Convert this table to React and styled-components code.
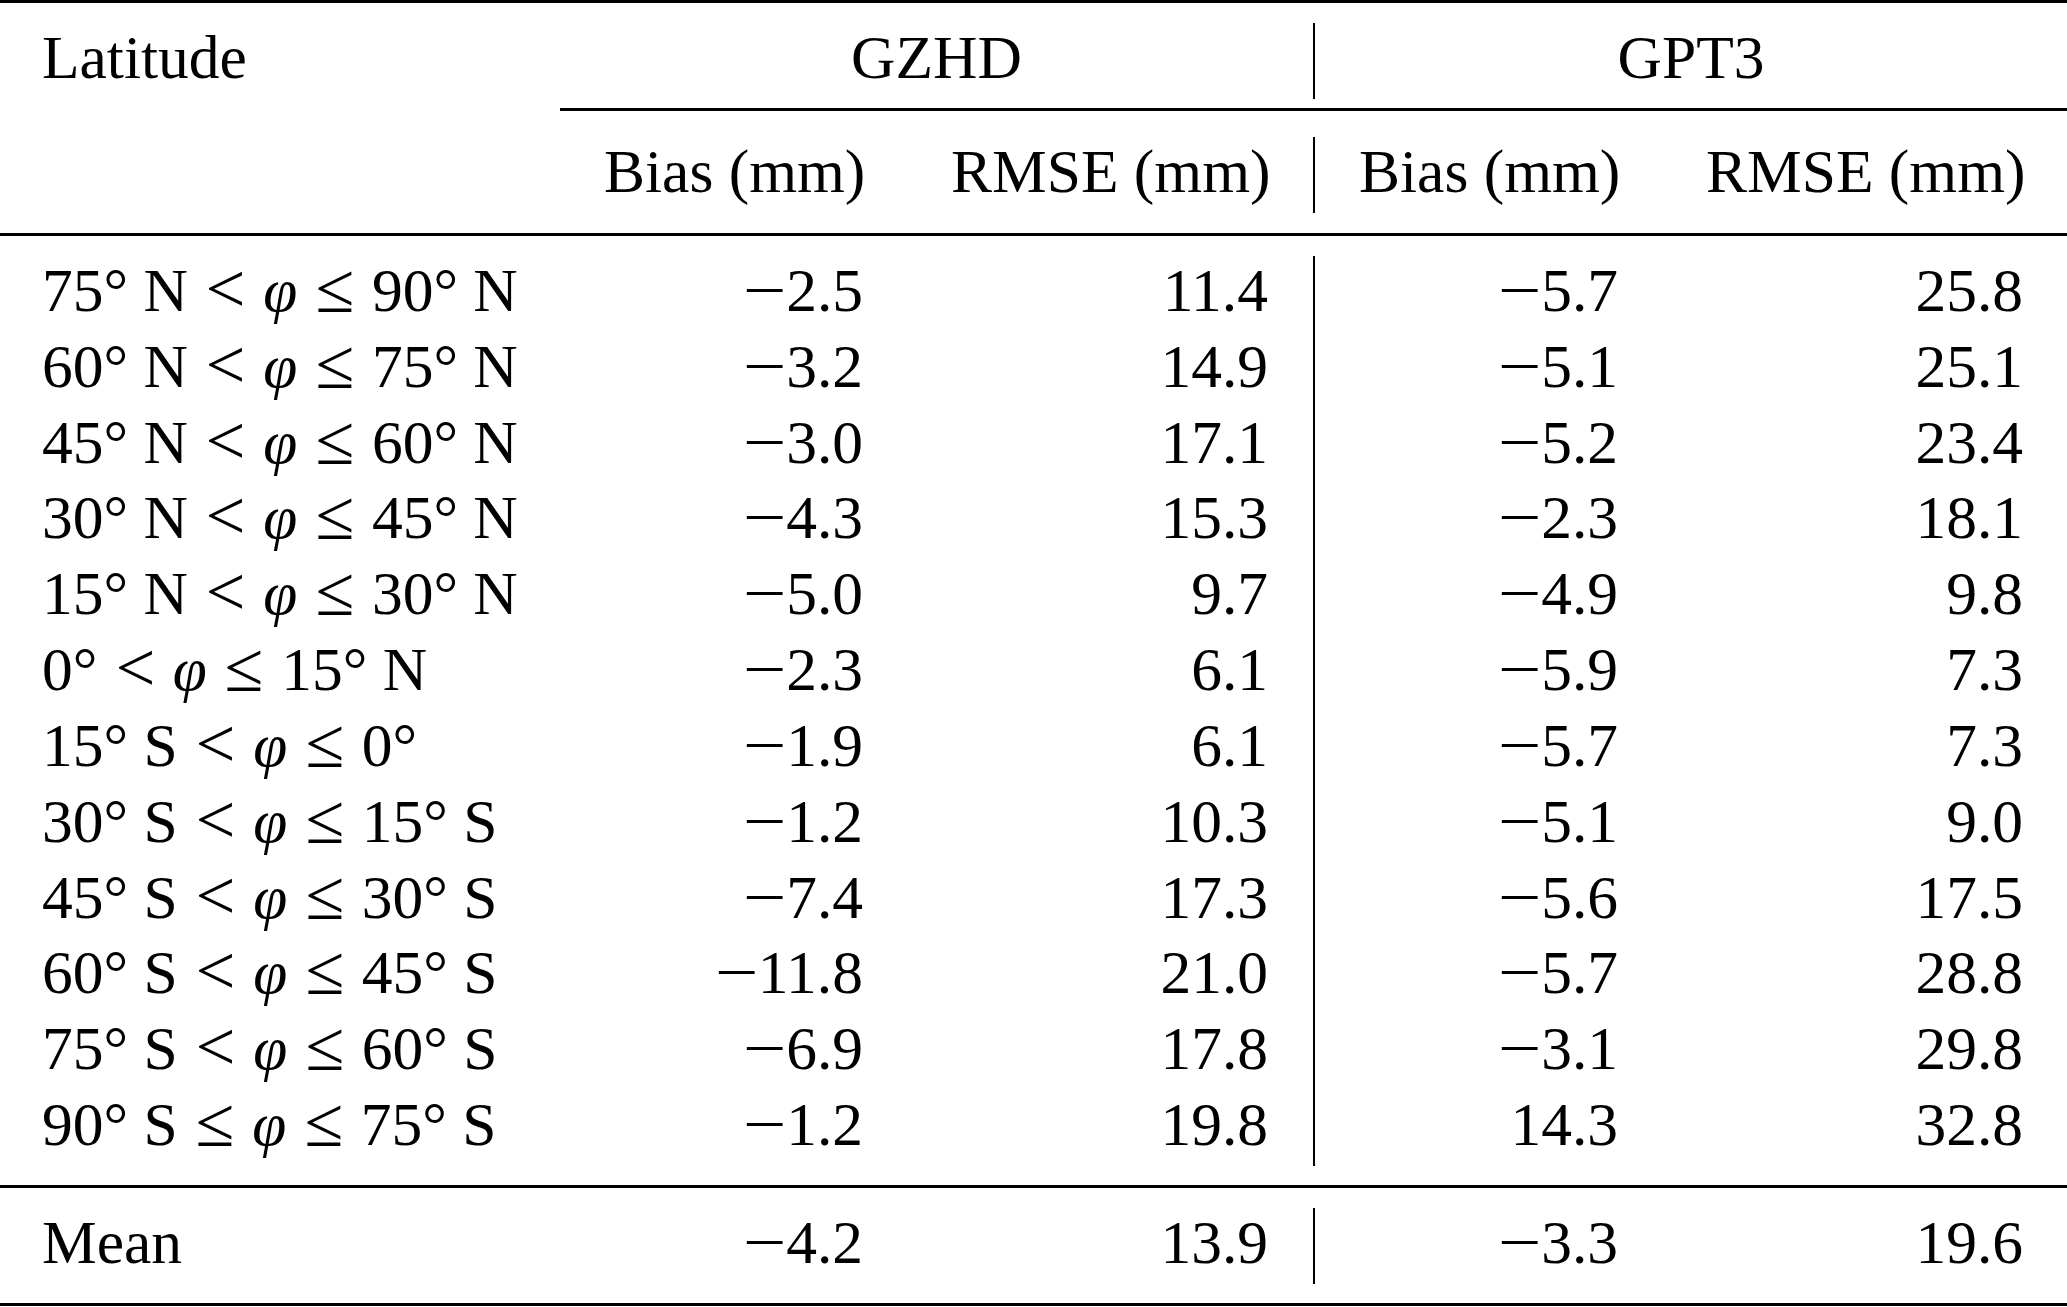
import React from 'react';
import styled, { createGlobalStyle } from 'styled-components';

const GlobalStyle = createGlobalStyle`
  html, body {
    margin: 0;
    padding: 0;
    background: #ffffff;
    overflow: hidden;
  }
`;

const Table = styled.div`
  width: 2067px;
  font-family: "Liberation Serif", "Times New Roman", serif;
  font-size: 61.5px;
  color: #000000;
`;

const Rule = styled.div`
  height: 3px;
  background: #000000;
  margin-left: ${({ $indent }) => $indent || 0}px;
`;

const Block = styled.div`
  padding-top: ${({ $pt }) => $pt}px;
  padding-bottom: ${({ $pb }) => $pb}px;
`;

const Row = styled.div`
  display: grid;
  grid-template-columns: 560px 347px 406px 349px 405px;
  height: ${({ $h }) => $h || 76}px;
  line-height: 68px;
  white-space: nowrap;
`;

const Cell = styled.div`
  padding: 0 ${({ $pr }) => ($pr === undefined ? 44 : $pr)}px 0 ${({ $pl }) => ($pl === undefined ? 44 : $pl)}px;
  text-align: ${({ $align }) => $align || 'right'};
  grid-column: ${({ $span }) => ($span ? `span ${$span}` : 'auto')};
  border-left: ${({ $divider }) => ($divider ? '2px solid #000' : 'none')};
  box-sizing: border-box;
`;

const Minus = styled.span`
  display: inline-block;
  margin-right: 8px;
  transform: scaleX(1.25);
  transform-origin: left center;
`;

const Phi = styled.span`
  font-style: italic;
`;

const Rel = styled.span`
  display: inline-block;
  margin: 0 5px;
  transform: scale(1.15);
  transform-origin: 50% 70%;
`;

const rows = [
  ['75° N', '<', '≤', '90° N', '−2.5', '11.4', '−5.7', '25.8'],
  ['60° N', '<', '≤', '75° N', '−3.2', '14.9', '−5.1', '25.1'],
  ['45° N', '<', '≤', '60° N', '−3.0', '17.1', '−5.2', '23.4'],
  ['30° N', '<', '≤', '45° N', '−4.3', '15.3', '−2.3', '18.1'],
  ['15° N', '<', '≤', '30° N', '−5.0', '9.7', '−4.9', '9.8'],
  ['0°', '<', '≤', '15° N', '−2.3', '6.1', '−5.9', '7.3'],
  ['15° S', '<', '≤', '0°', '−1.9', '6.1', '−5.7', '7.3'],
  ['30° S', '<', '≤', '15° S', '−1.2', '10.3', '−5.1', '9.0'],
  ['45° S', '<', '≤', '30° S', '−7.4', '17.3', '−5.6', '17.5'],
  ['60° S', '<', '≤', '45° S', '−11.8', '21.0', '−5.7', '28.8'],
  ['75° S', '<', '≤', '60° S', '−6.9', '17.8', '−3.1', '29.8'],
  ['90° S', '≤', '≤', '75° S', '−1.2', '19.8', '14.3', '32.8'],
];

const mean = ['−4.2', '13.9', '−3.3', '19.6'];

const Num = ({ value }) =>
  value.startsWith('−') ? (
    <>
      <Minus>−</Minus>
      {value.slice(1)}
    </>
  ) : (
    value
  );

const Values = ({ values }) => (
  <>
    <Cell>
      <Num value={values[0]} />
    </Cell>
    <Cell $pr={45}>
      <Num value={values[1]} />
    </Cell>
    <Cell $divider>
      <Num value={values[2]} />
    </Cell>
    <Cell>
      <Num value={values[3]} />
    </Cell>
  </>
);

const App = () => (
  <Table>
    <GlobalStyle />
    <Rule />
    <Block $pt={20} $pb={9}>
      <Row>
        <Cell $align="left" $pl={42}>Latitude</Cell>
        <Cell $span={2} $align="center">GZHD</Cell>
        <Cell $span={2} $align="center" $divider>GPT3</Cell>
      </Row>
    </Block>
    <Rule $indent={560} />
    <Block $pt={26} $pb={20}>
      <Row>
        <Cell />
        <Cell>Bias (mm)</Cell>
        <Cell $pr={45}>RMSE (mm)</Cell>
        <Cell $divider>Bias (mm)</Cell>
        <Cell>RMSE (mm)</Cell>
      </Row>
    </Block>
    <Rule />
    <Block $pt={20} $pb={19}>
      {rows.map(([low, rel1, rel2, high, ...values]) => (
        <Row key={low + high} $h={75.83}>
          <Cell $align="left" $pl={42}>
            {low} <Rel>{rel1}</Rel> <Phi>φ</Phi> <Rel>{rel2}</Rel> {high}
          </Cell>
          <Values values={values} />
        </Row>
      ))}
    </Block>
    <Rule />
    <Block $pt={20} $pb={19}>
      <Row>
        <Cell $align="left" $pl={42}>Mean</Cell>
        <Values values={mean} />
      </Row>
    </Block>
    <Rule />
  </Table>
);

export default App;
